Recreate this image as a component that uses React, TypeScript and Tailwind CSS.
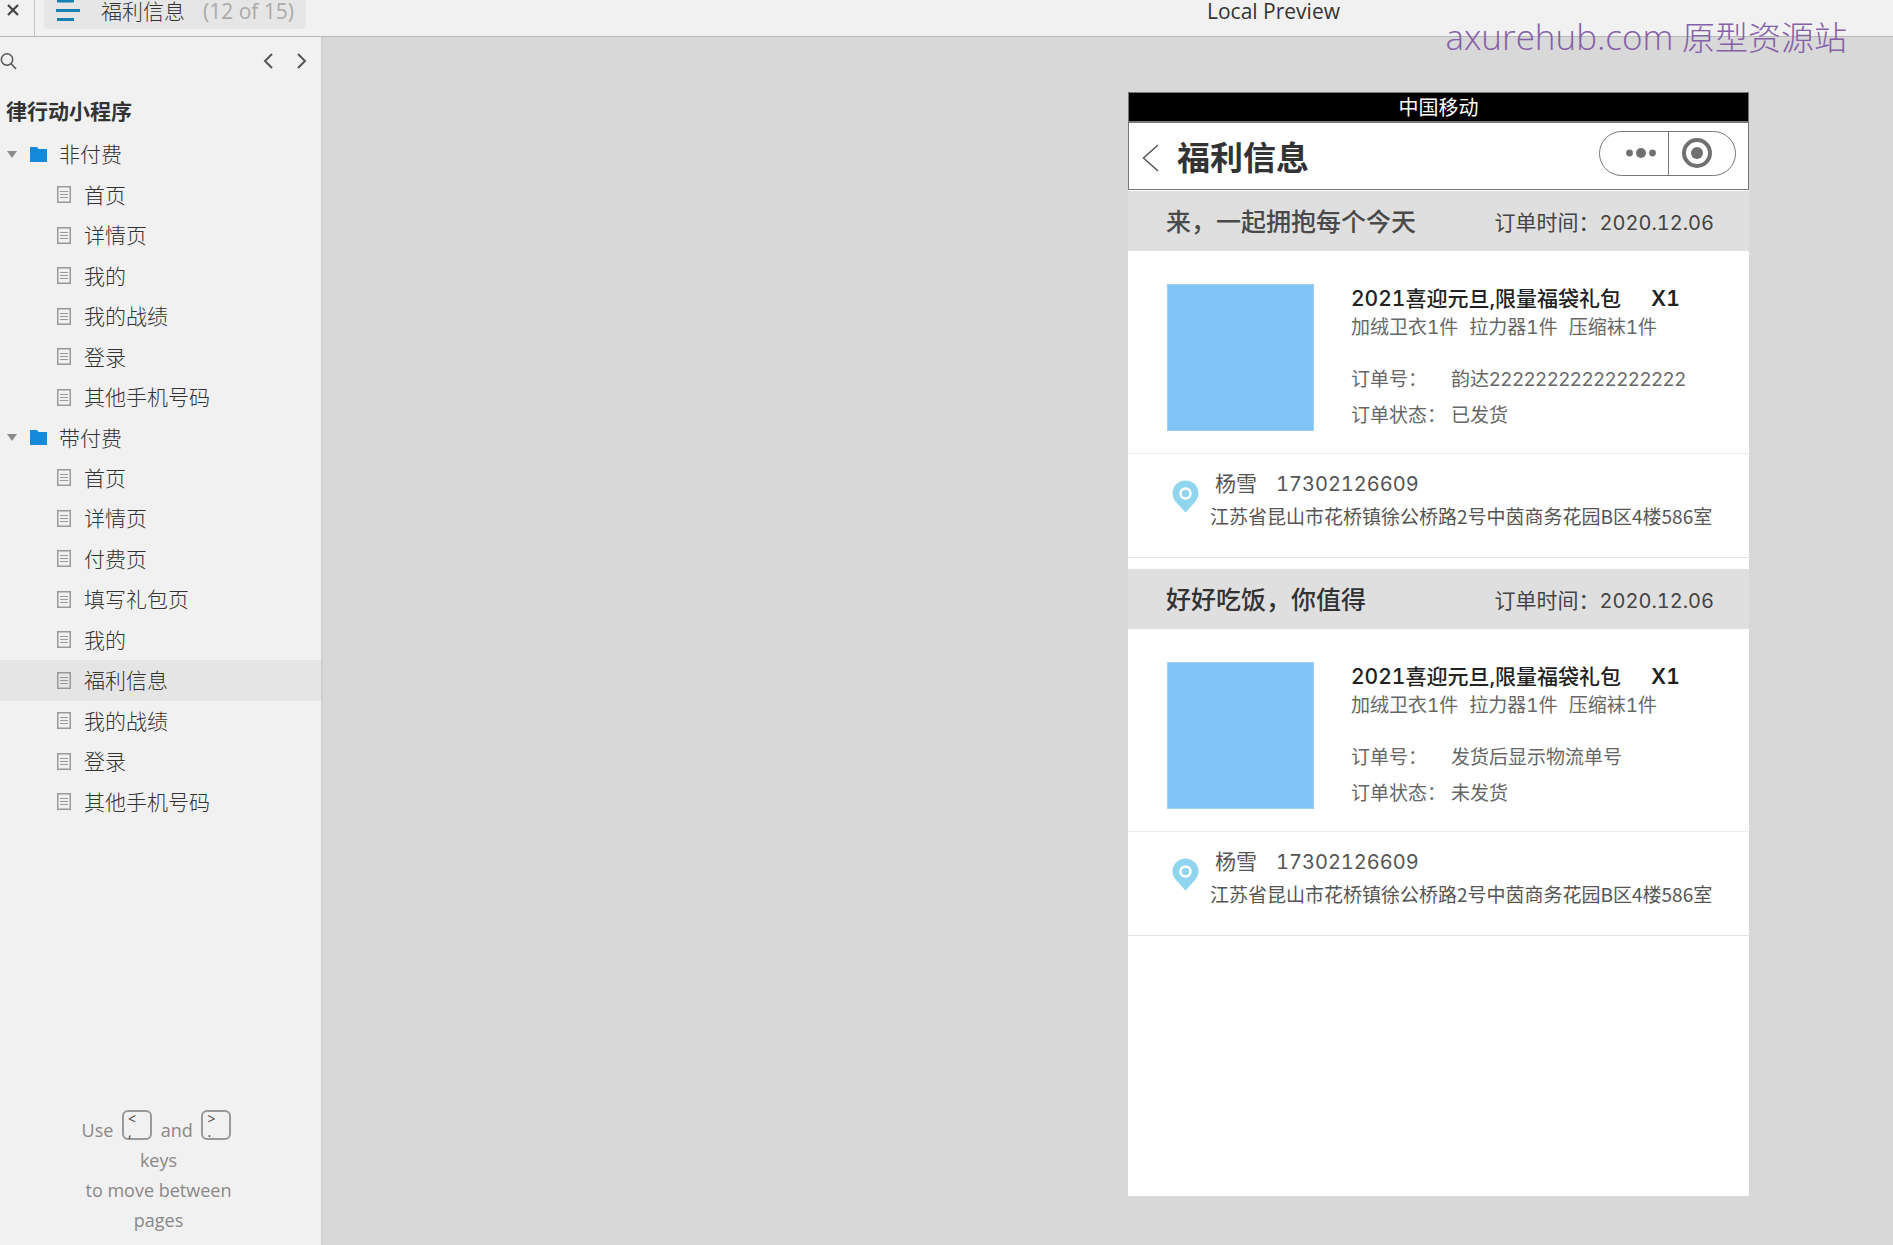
import React, { useState } from "react";

type TreeItem = { id: number; label: string; folder?: boolean };

const tree: TreeItem[] = [
  { id: 0, label: "非付费", folder: true },
  { id: 1, label: "首页" },
  { id: 2, label: "详情页" },
  { id: 3, label: "我的" },
  { id: 4, label: "我的战绩" },
  { id: 5, label: "登录" },
  { id: 6, label: "其他手机号码" },
  { id: 7, label: "带付费", folder: true },
  { id: 8, label: "首页" },
  { id: 9, label: "详情页" },
  { id: 10, label: "付费页" },
  { id: 11, label: "填写礼包页" },
  { id: 12, label: "我的" },
  { id: 13, label: "福利信息" },
  { id: 14, label: "我的战绩" },
  { id: 15, label: "登录" },
  { id: 16, label: "其他手机号码" },
];

const orders = [
  {
    title: "来，一起拥抱每个今天",
    titleColor: "text-[#4a4a4a]",
    number: "韵达22222222222222222",
    status: "已发货",
  },
  {
    title: "好好吃饭，你值得",
    titleColor: "text-[#333333]",
    number: "发货后显示物流单号",
    status: "未发货",
  },
];

const PageIcon = () => (
  <svg width="14" height="17" viewBox="0 0 14 17" fill="none" stroke="#999999">
    <rect x="0.75" y="0.75" width="12.5" height="15.5" strokeWidth="1.5" />
    <path d="M3 5.5h8M3 8.5h8M3 11.5h8" />
  </svg>
);

const FolderIcon = () => (
  <svg width="17" height="15" viewBox="0 0 17 15" fill="#1489d8">
    <path d="M0 0h7l1.5 2H17v13H0z" />
  </svg>
);

const PinIcon = () => (
  <svg width="27" height="33" viewBox="0 0 27 33">
    <path
      d="M13.5 0.5C6.3 0.5 0.5 6.2 0.5 13.2c0 4.3 2.3 7.4 5 10.5l8 8.8 8-8.8c2.7-3.1 5-6.2 5-10.5C26.5 6.2 20.7 0.5 13.5 0.5z"
      fill="#8fd5ee"
    />
    <circle cx="13.5" cy="13.5" r="5" fill="none" stroke="#ffffff" strokeWidth="2.5" />
  </svg>
);

const Key = ({ top, bottom }: { top: string; bottom: string }) => (
  <kbd className="mx-1 inline-block w-[30px] rounded-md border-2 border-[#999999] pl-1 text-left font-['Open_Sans','Noto_Sans',sans-serif] text-sm leading-[13px] text-[#444444]">
    <span className="block">{top}</span>
    <span className="block">{bottom}</span>
  </kbd>
);

const Toolbar = () => (
  <header className="flex h-[37px] w-full items-start border-b border-[#b8b8b8] bg-[#f1f1f1] font-['Open_Sans','Noto_Sans_CJK_SC',sans-serif]">
    <div className="flex h-full w-[35px] justify-center border-r border-[#c4c4c4] pr-2">
      <button aria-label="Close" className="h-5">
        <svg width="12" height="12" viewBox="0 0 12 12" stroke="#444444" strokeWidth="2.2">
          <path d="M1 1l10 10M11 1L1 11" />
        </svg>
      </button>
    </div>
    <button className="ml-[9px] flex h-[29px] w-[262px] items-start rounded-b-sm bg-[#e6e6e6] pl-3 text-[21px] leading-[22px] font-light">
      <svg width="24" height="22" viewBox="0 0 24 22" stroke="#1682b4" strokeWidth="3">
        <path d="M1 1h17M0 10.5h24M1 19.5h17" />
      </svg>
      <span className="ml-[21px] text-[#333333]">福利信息</span>
      <span className="ml-[18px] font-normal text-[#aaaaaa]">(12 of 15)</span>
    </button>
    <p className="flex-1 pl-[348px] text-center text-[21px] leading-[22px] text-[#333333]">
      Local Preview
    </p>
  </header>
);

const Sidebar = () => {
  const [active, setActive] = useState(13);

  return (
    <aside className="flex w-[323px] shrink-0 flex-col border-r-2 border-[#cfcfcf] bg-[#f1f1f1] font-['Open_Sans','Noto_Sans_CJK_SC',sans-serif]">
      <div className="flex h-12 items-center">
        <button aria-label="Search">
          <svg width="17" height="17" viewBox="0 0 17 17" fill="none" stroke="#555555" strokeWidth="1.5">
            <circle cx="7" cy="6.5" r="5.7" />
            <path d="M11 10.5l5 5.5" />
          </svg>
        </button>
        <button aria-label="Previous page" className="ml-auto">
          <svg width="10" height="16" viewBox="0 0 10 16" fill="none" stroke="#555555" strokeWidth="2">
            <path d="M9 1L2 8l7 7" />
          </svg>
        </button>
        <button aria-label="Next page" className="mr-[14px] ml-6">
          <svg width="10" height="16" viewBox="0 0 10 16" fill="none" stroke="#555555" strokeWidth="2">
            <path d="M1 1l7 7-7 7" />
          </svg>
        </button>
      </div>
      <h1 className="mt-[11px] pl-[6px] text-[21px] leading-[30px] font-bold text-[#333333]">
        律行动小程序
      </h1>
      <ul className="mt-2 grid h-[688px] auto-rows-fr">
        {tree.map((item) => (
          <li key={item.id} className={item.id === active ? "bg-[#e5e5e5]" : ""}>
            <button
              onClick={() => setActive(item.id)}
              className="flex h-full w-full items-center text-[21px] leading-8 font-light text-[#333333]"
            >
              {item.folder ? (
                <>
                  <svg className="ml-[7px]" width="10" height="7" viewBox="0 0 10 7" fill="#8a8a8a">
                    <path d="M0 0h10L5 7z" />
                  </svg>
                  <span className="mr-3 ml-[13px]">
                    <FolderIcon />
                  </span>
                </>
              ) : (
                <span className="mr-[13px] ml-[57px]">
                  <PageIcon />
                </span>
              )}
              {item.label}
            </button>
          </li>
        ))}
      </ul>
      <p className="mx-auto mt-auto mb-[10px] w-[164px] pr-1 text-center text-lg leading-[30px] text-[#888888]">
        Use <Key top="<" bottom="," /> and <Key top=">" bottom="." /> keys
        <br />
        to move between pages
      </p>
    </aside>
  );
};

const Order = ({ order }: { order: (typeof orders)[number] }) => (
  <section className="mb-[11px]">
    <div className="flex h-[60px] items-center justify-between bg-[#dfdfdf] pt-1 pr-[35px] pl-[38px]">
      <h3 className={`text-[25px] font-medium ${order.titleColor}`}>{order.title}</h3>
      <p className="text-[21px] text-[#444444]">
        订单时间：<time className="text-xl">2020.12.06</time>
      </p>
    </div>
    <div className="flex h-[203px] border-b border-[#ececec] pt-[33px] pl-[39px]">
      <div className="h-[147px] w-[147px] border border-[#a5cdea] bg-[#80c4f6]" />
      <div className="ml-[37px] text-[19px] text-[#666666]">
        <h4 className="flex text-[21px] leading-[30px] font-medium text-[#222222]">
          2021喜迎元旦,限量福袋礼包
          <span className="ml-[30px] font-semibold">X1</span>
        </h4>
        <p className="flex gap-[11px] leading-7">
          <span>加绒卫衣1件</span>
          <span>拉力器1件</span>
          <span>压缩袜1件</span>
        </p>
        <dl className="mt-5 grid grid-cols-[100px_auto] leading-9 normal-nums">
          <dt>订单号：</dt>
          <dd>{order.number}</dd>
          <dt>订单状态：</dt>
          <dd>{order.status}</dd>
        </dl>
      </div>
    </div>
    <div className="flex h-[104px] items-start border-b border-[#e4e4e4] pt-[14px] pl-11 text-[#555555]">
      <div className="mt-3">
        <PinIcon />
      </div>
      <address className="ml-[11px] not-italic">
        <p className="flex gap-[19px] pl-[5px] text-[21px] leading-8">
          <span>杨雪</span>
          <span className="text-xl leading-8">17302126609</span>
        </p>
        <p className="font-['Noto_Sans_CJK_SC',sans-serif] text-[19px] leading-8">
          江苏省昆山市花桥镇徐公桥路2号中茵商务花园B区4楼586室
        </p>
      </address>
    </div>
  </section>
);

const Phone = () => (
  <article className="mt-[55px] mr-[144px] mb-[49px] w-[621px] bg-white font-['Inter','Noto_Sans_CJK_SC',sans-serif] tabular-nums">
    <div className="h-[30px] border border-[#777777] bg-black text-center text-xl leading-[30px] text-white">
      中国移动
    </div>
    <div className="mb-px flex h-[68px] items-center border border-[#777777] pt-1 pr-3 pl-[13px]">
      <button aria-label="Back">
        <svg width="17" height="28" viewBox="0 0 17 28" fill="none" stroke="#555555" strokeWidth="1.5">
          <path d="M16 1L1.5 14 16 27" />
        </svg>
      </button>
      <h2 className="ml-[18px] text-[33px] leading-10 font-bold text-[#333333]">福利信息</h2>
      <div className="mb-[10px] ml-auto flex h-[45px] w-[137px] rounded-full border border-[#777777]">
        <button aria-label="More" className="flex flex-1 items-center border-r border-[#777777] pl-[26px]">
          <svg width="30" height="10" viewBox="0 0 30 10" fill="#707070">
            <circle cx="3.5" cy="5" r="3.4" />
            <circle cx="15" cy="5" r="5" />
            <circle cx="26.5" cy="5" r="3.4" />
          </svg>
        </button>
        <button aria-label="Exit" className="flex w-[66px] items-center pl-[13px]">
          <svg width="30" height="30" viewBox="0 0 30 30">
            <circle cx="15" cy="15" r="13" fill="none" stroke="#707070" strokeWidth="4" />
            <circle cx="15" cy="15" r="6" fill="#707070" />
          </svg>
        </button>
      </div>
    </div>
    {orders.map((order) => (
      <Order key={order.title} order={order} />
    ))}
    <div className="h-[248px]" />
  </article>
);

const App = () => {
  return (
    <div className="relative flex min-h-screen flex-col bg-[#d8d8d8]">
      <Toolbar />
      <div className="flex flex-1">
        <Sidebar />
        <main className="flex flex-1 justify-end">
          <Phone />
        </main>
      </div>
      <p className="absolute top-3 right-[46px] font-['Open_Sans','Noto_Sans_CJK_SC',sans-serif] text-[33px] leading-[50px] font-light text-[#8560a8]">
        <span className="text-[35px]">axurehub.com</span> 原型资源站
      </p>
    </div>
  );
};

export default App;
